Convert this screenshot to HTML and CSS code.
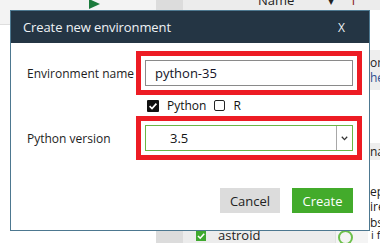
FILE: index.html
```html
<!DOCTYPE html>
<html>
<head>
<meta charset="utf-8">
<link rel="stylesheet" href="styles.css">
</head>
<body>
<div class="app">
  <div class="col-left">
    <div class="toolbar">
      <svg class="play" width="11" height="10" viewBox="0 0 11 10"><polygon points="0,0 11,5 0,10" fill="#1b7a3c"/></svg>
    </div>
  </div>
  <div class="col-mid"></div>
  <div class="col-right">
    <div class="thead">
      <span class="th-name">Name</span>
      <span class="th-sort">▾</span>
      <span class="th-up">↑</span>
    </div>
    <div class="rows">
      <div class="c-name"></div>
      <div class="c-status"></div>
      <div class="c-desc">
        <div class="d-gap h40"></div>
        <div class="d-block g h40"><span>or</span><span class="blue">he</span></div>
        <div class="d-gap h53"></div>
        <div class="d-block g h17"><span>na</span></div>
        <div class="d-gap h20"></div>
        <div class="d-block w h38"><span>ep</span><span>ire</span></div>
        <div class="d-block w h10"><span>bs</span></div>
      </div>
    </div>
    <div class="pkg-row">
      <div class="pkg-name"><span class="gcheck"><svg width="10" height="10" viewBox="0 0 10 10"><path d="M2 5 L4.2 7.2 L8.2 2.8" fill="none" stroke="#fff" stroke-width="1.6"/></svg></span><span>astroid</span></div>
      <div class="pkg-status"><span class="ring"></span></div>
      <div class="pkg-desc">i f</div>
    </div>
  </div>
</div>

<div class="dialog">
  <div class="dlg-head">
    <span class="dlg-title">Create new environment</span>
    <span class="dlg-close">X</span>
  </div>
  <div class="dlg-body">
    <div class="field-row">
      <label class="field-label">Environment name</label>
      <div class="text-input hl">python-35</div>
    </div>
    <div class="check-row">
      <span class="cb cb-on"><svg width="12" height="12" viewBox="0 0 12 12"><path d="M2.6 6.2 L5 8.5 L9.4 3.6" fill="none" stroke="#fff" stroke-width="1.7"/></svg></span>
      <span class="cb-label">Python</span>
      <span class="cb cb-off"></span>
      <span class="cb-label">R</span>
    </div>
    <div class="field-row row2">
      <label class="field-label">Python version</label>
      <div class="select hl">
        <span class="select-value">3.5</span>
        <span class="select-arrow"><svg width="7" height="5" viewBox="0 0 7 5"><path d="M0.8 0.8 L3.5 3.6 L6.2 0.8" fill="none" stroke="#333" stroke-width="1.3"/></svg></span>
      </div>
    </div>
    <div class="dlg-foot">
      <button class="btn btn-cancel">Cancel</button>
      <button class="btn btn-create">Create</button>
    </div>
  </div>
</div>
</body>
</html>
```

FILE: styles.css
```css
html, body {
  margin: 0;
  padding: 0;
}
body {
  width: 380px;
  height: 243px;
  overflow: hidden;
  position: relative;
  font-family: "Open Sans", "DejaVu Sans", sans-serif;
  background: #fff;
}
.app {
  display: grid;
  grid-template-columns: 156px 27px 1fr;
  height: 243px;
  overflow: hidden;
}
.col-left {
  background: #fff;
}
.toolbar {
  height: 25px;
  background: #f3f3f3;
  border-bottom: 1px solid #dedede;
  box-sizing: border-box;
  position: relative;
}
.play {
  position: absolute;
  left: 89px;
  top: -1px;
}
.col-mid {
  background: #dcdcdc;
}
.col-right {
  display: flex;
  flex-direction: column;
  background: #fff;
  overflow: hidden;
}
.thead {
  height: 10px;
  flex: none;
  background: #ececec;
  display: flex;
  align-items: flex-end;
  overflow: hidden;
  font-size: 13px;
  color: #222;
}
.thead span {
  line-height: 13px;
  margin-bottom: 3px;
}
.th-name { margin-left: 75px; }
.th-sort { margin-left: 34px; font-size: 11px; }
.th-up { margin-left: 14px; color: #8a1c1c; }
.rows {
  display: grid;
  grid-template-columns: 152px 33px 1fr;
  height: 218px;
  flex: none;
  overflow: hidden;
}
.c-desc {
  display: flex;
  flex-direction: column;
  font-size: 12px;
  color: #222;
  overflow: hidden;
}
.d-gap, .d-block {
  flex: none;
}
.d-block {
  display: flex;
  flex-direction: column;
  justify-content: center;
  gap: 1px;
  padding-left: 2px;
  line-height: 14px;
  white-space: nowrap;
  overflow: hidden;
}
.d-block.g { background: #eeeeee; }
.d-block.w { background: #fff; }
.blue { color: #2f4f8f; }
.h40 { height: 40px; }
.h53 { height: 53px; }
.h17 { height: 17px; }
.h20 { height: 20px; }
.h38 { height: 38px; }
.h10 { height: 10px; }
.pkg-row {
  display: grid;
  grid-template-columns: 152px 33px 1fr;
  height: 15px;
  flex: none;
  background: #ececec;
  font-size: 13px;
  color: #222;
  overflow: hidden;
}
.pkg-name {
  display: flex;
  align-items: flex-start;
  gap: 12px;
  padding-left: 13px;
  line-height: 14px;
}
.gcheck {
  width: 10px;
  height: 10px;
  background: #3fa92f;
  margin-top: 3px;
  display: flex;
}
.pkg-status {
  background: #f4f4f4;
  border-left: 1px solid #e2e2e2;
  position: relative;
}
.ring {
  position: absolute;
  left: 2px;
  top: 2px;
  width: 11px;
  height: 11px;
  border: 2.5px solid #6cc04a;
  border-radius: 50%;
}
.pkg-desc {
  font-size: 11px;
  line-height: 14px;
  background: #fff;
  padding-left: 3px;
  white-space: nowrap;
  overflow: hidden;
}

/* dialog (modal overlay) */
.dialog {
  position: absolute;
  left: 10px;
  top: 10px;
  width: 360px;
  height: 221px;
  box-sizing: border-box;
  border: 1px solid #4d7890;
  background: #fff;
  display: flex;
  flex-direction: column;
}
.dlg-head {
  height: 32px;
  background: #243544;
  display: flex;
  align-items: center;
  justify-content: space-between;
  padding: 0 24px 0 12px;
  color: #eef2f5;
  flex: none;
}
.dlg-title {
  font-size: 13px;
  letter-spacing: -0.1px;
}
.dlg-close {
  font-size: 12px;
}
.dlg-body {
  flex: 1;
  display: flex;
  flex-direction: column;
  padding: 17px 16px 17px 16px;
}
.field-row {
  display: grid;
  grid-template-columns: 118px 1fr;
  align-items: center;
}
.field-label {
  font-size: 12px;
  color: #1d1d1d;
}
.hl {
  outline: 5px solid #ed1c24;
  outline-offset: 4px;
}
.text-input {
  height: 26px;
  box-sizing: border-box;
  border: 1px solid #8a8a8a;
  font-size: 13px;
  color: #141428;
  display: flex;
  align-items: center;
  padding-left: 9px;
}
.check-row {
  display: flex;
  align-items: center;
  margin-top: 13px;
  padding-left: 120px;
  height: 13px;
  font-size: 12px;
  color: #111;
}
.cb {
  box-sizing: border-box;
  display: inline-flex;
  flex: none;
}
.cb-on {
  width: 12px;
  height: 12px;
  background: #111;
  border-radius: 1px;
}
.cb-off {
  width: 11px;
  height: 11px;
  border: 1.5px solid #222;
  border-radius: 2px;
  margin-left: 8px;
}
.cb-label {
  margin-left: 8px;
}
.row2 {
  margin-top: 13px;
}
.select {
  height: 26px;
  box-sizing: border-box;
  border: 1px solid #6bb545;
  display: flex;
  align-items: stretch;
}
.select-value {
  flex: 1;
  display: flex;
  align-items: center;
  padding-left: 24px;
  font-size: 13px;
  color: #141414;
}
.select-arrow {
  width: 15px;
  border-left: 1px solid #a8a8a8;
  display: flex;
  align-items: center;
  justify-content: center;
}
.dlg-foot {
  margin-top: auto;
  display: flex;
  justify-content: flex-end;
  gap: 12px;
}
.btn {
  height: 25px;
  border: none;
  font-family: "Open Sans", "DejaVu Sans", sans-serif;
  font-size: 13px;
  padding: 0;
}
.btn-cancel {
  width: 60px;
  background: #dcdcdc;
  color: #222;
}
.btn-create {
  width: 61px;
  background: #43ab2b;
  color: #fff;
}
```
